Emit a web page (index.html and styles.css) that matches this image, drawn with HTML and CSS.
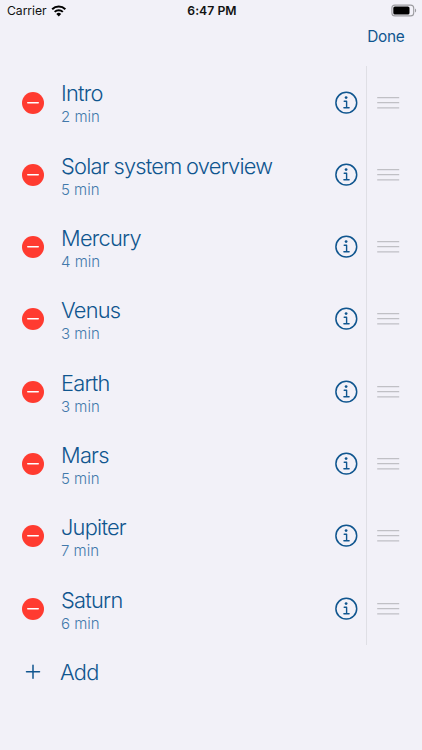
FILE: index.html
```
<!DOCTYPE html>
<html lang="en">
<head>
<meta charset="utf-8">
<title>Sections</title>
<link rel="stylesheet" href="styles.css">
</head>
<body>
<svg class="symbols" width="0" height="0">
  <symbol id="minus" viewBox="0 0 22 22"><circle cx="11" cy="11" r="11" fill="#ff3b30"/><path d="M5.8 10.8h10.4" stroke="#fff" stroke-width="1.6" stroke-linecap="round"/></symbol>
  <symbol id="info" viewBox="0 0 24 24"><circle cx="12.3" cy="11.7" r="10.4" fill="none" stroke="#10568f" stroke-width="1.5"/><circle cx="12.1" cy="6.6" r="1.4" fill="#10568f"/><path d="M10.2 10.2h2.4v6.5M9.9 16.8h5.2" fill="none" stroke="#10568f" stroke-width="1.4" stroke-linecap="round" stroke-linejoin="round"/></symbol>
  <symbol id="grip" viewBox="0 0 22 12"><path d="M.2 .6h22M.2 5.7h22M.2 10.8h22" stroke="#c0c0c5" stroke-width="1.3"/></symbol>
</svg>
<header class="status">
  <div class="carrier"><span>Carrier</span>
    <svg class="wifi" viewBox="0 0 16 12"><path d="M1.2 4.2a9.8 9.8 0 0 1 13.6 0M3.8 6.9a6.1 6.1 0 0 1 8.4 0" fill="none" stroke="#000" stroke-width="2.1"/><path d="M8 11.6 5.5 9.1a3.6 3.6 0 0 1 5 0z"/></svg>
  </div>
  <div class="clock">6:47 PM</div>
  <svg class="battery" viewBox="0 0 26 12"><rect x=".9" y=".1" width="21.8" height="10.8" rx="3" fill="none" stroke="#9c9ca0" stroke-width="1.1"/><rect x="2.3" y="1.5" width="16.2" height="8" rx="1.6"/><path d="M24 3.6v4c1.5-.6 1.5-3.4 0-4z" fill="#9c9ca0"/></svg>
</header>
<nav class="toolbar"><span class="done">Done</span></nav>
<main>
  <ul class="list">
    <li class="row"><svg class="minus"><use href="#minus"/></svg><div class="text"><span class="title">Intro</span><span class="time">2 min</span></div><svg class="info"><use href="#info"/></svg><div class="handle"><svg class="grip"><use href="#grip"/></svg></div></li>
    <li class="row"><svg class="minus"><use href="#minus"/></svg><div class="text"><span class="title">Solar system overview</span><span class="time">5 min</span></div><svg class="info"><use href="#info"/></svg><div class="handle"><svg class="grip"><use href="#grip"/></svg></div></li>
    <li class="row"><svg class="minus"><use href="#minus"/></svg><div class="text"><span class="title">Mercury</span><span class="time">4 min</span></div><svg class="info"><use href="#info"/></svg><div class="handle"><svg class="grip"><use href="#grip"/></svg></div></li>
    <li class="row"><svg class="minus"><use href="#minus"/></svg><div class="text"><span class="title">Venus</span><span class="time">3 min</span></div><svg class="info"><use href="#info"/></svg><div class="handle"><svg class="grip"><use href="#grip"/></svg></div></li>
    <li class="row"><svg class="minus"><use href="#minus"/></svg><div class="text"><span class="title">Earth</span><span class="time">3 min</span></div><svg class="info"><use href="#info"/></svg><div class="handle"><svg class="grip"><use href="#grip"/></svg></div></li>
    <li class="row"><svg class="minus"><use href="#minus"/></svg><div class="text"><span class="title">Mars</span><span class="time">5 min</span></div><svg class="info"><use href="#info"/></svg><div class="handle"><svg class="grip"><use href="#grip"/></svg></div></li>
    <li class="row"><svg class="minus"><use href="#minus"/></svg><div class="text"><span class="title">Jupiter</span><span class="time">7 min</span></div><svg class="info"><use href="#info"/></svg><div class="handle"><svg class="grip"><use href="#grip"/></svg></div></li>
    <li class="row"><svg class="minus"><use href="#minus"/></svg><div class="text"><span class="title">Saturn</span><span class="time">6 min</span></div><svg class="info"><use href="#info"/></svg><div class="handle"><svg class="grip"><use href="#grip"/></svg></div></li>
  </ul>
  <div class="add"><svg class="plus" viewBox="0 0 14 14"><path d="M7 .2v13M.5 6.7h13" stroke="#10568f" stroke-width="1.5" stroke-linecap="round"/></svg><span class="title">Add</span></div>
</main>
</body>
</html>
```
FILE: styles.css
```
* { box-sizing: border-box; }
body {
  margin: 0;
  width: 422px;
  height: 750px;
  overflow: hidden;
  background: #f2f1f8;
  color: #10568f;
  font-family: Inter, "Liberation Sans", sans-serif;
}
svg { display: block; flex: none; overflow: visible; }
symbol { overflow: visible; }
.symbols { position: absolute; }
.status {
  display: grid;
  grid-template-columns: 1fr auto 1fr;
  align-items: center;
  height: 22px;
  padding: 0 5px 0 7px;
  color: #111;
  font-size: 12.2px;
  line-height: 22px;
}
.carrier { display: flex; align-items: center; gap: 4px; letter-spacing: -0.05px; }
.wifi { width: 15.5px; height: 12px; }
.clock { font-weight: 600; letter-spacing: 0.05px; }
.battery { width: 26px; height: 12px; justify-self: end; }
.toolbar {
  display: flex;
  justify-content: flex-end;
  height: 44.4px;
  padding: 5px 17.5px 0 0;
}
.done { font-size: 15.4px; line-height: 20px; letter-spacing: -0.3px; }
.list { margin: 0; padding: 0; list-style: none; }
.row {
  display: flex;
  align-items: center;
  height: 72.3px;
  padding-left: 22px;
}
.minus { width: 22px; height: 22px; }
.text { display: flex; flex: 1; flex-direction: column; padding: 1.8px 0 0 17px; }
.title { font-size: 21.8px; font-weight: 300; line-height: 27px; letter-spacing: -0.75px; word-spacing: -0.8px; white-space: nowrap; }
.time { font-size: 15px; font-weight: 300; line-height: 19px; color: #4279ab; }
.info { width: 24px; height: 24px; margin-right: 8px; }
.handle {
  display: flex;
  align-items: center;
  align-self: stretch;
  width: 56px;
  padding-left: 10px;
  border-left: 1px solid #dfdfe5;
}
.grip { width: 22px; height: 12px; }
.add { display: flex; align-items: center; height: 55px; padding-left: 26px; }
.add .title { padding-left: 20px; letter-spacing: -0.7px; }
.plus { width: 14px; height: 14px; }
```
